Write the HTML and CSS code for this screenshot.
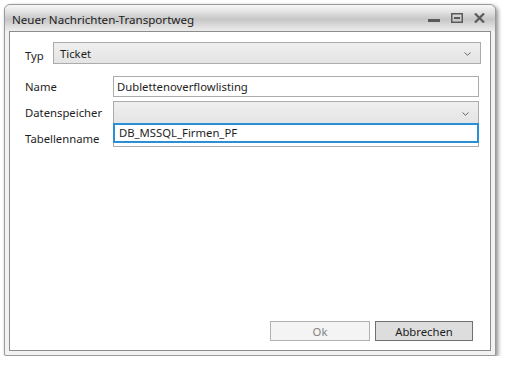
FILE: index.html
```html
<!DOCTYPE html>
<html lang="de">
<head>
  <meta charset="UTF-8">
  <title>Neuer Nachrichten-Transportweg</title>
  <link rel="stylesheet" href="styles.css">
</head>
<body>
  <div class="window">
    <div class="titlebar">
      <span class="title">Neuer Nachrichten-Transportweg</span>
      <div class="caption-buttons">
        <svg width="12" height="10" viewBox="0 0 12 10"><rect x="0" y="6" width="12" height="3" fill="#5a5a5a"/></svg>
        <svg width="12" height="10" viewBox="0 0 12 10"><rect x="0.75" y="0.75" width="10.5" height="8.5" fill="none" stroke="#5a5a5a" stroke-width="1.5"/><rect x="3" y="4" width="6" height="2" fill="#5a5a5a"/></svg>
        <svg width="11" height="10" viewBox="0 0 11 10"><path d="M1 0.5 L10 9.5 M10 0.5 L1 9.5" stroke="#5a5a5a" stroke-width="2.2"/></svg>
      </div>
    </div>

    <div class="content">
      <div class="typ-row">
        <label class="typ-label">Typ</label>
        <div class="combo">
          <span>Ticket</span>
          <svg class="chevron" width="7" height="4" viewBox="0 0 7 4"><path d="M0.5 0.5 L3.5 3.3 L6.5 0.5" fill="none" stroke="#666" stroke-width="1"/></svg>
        </div>
      </div>

      <div class="form">
        <label>Name</label>
        <div class="textbox">Dublettenoverflowlisting</div>

        <label>Datenspeicher</label>
        <div class="combo combo-small">
          <span></span>
          <svg class="chevron" width="7" height="4" viewBox="0 0 7 4"><path d="M0.5 0.5 L3.5 3.3 L6.5 0.5" fill="none" stroke="#666" stroke-width="1"/></svg>
        </div>

        <label class="label-tab">Tabellenname</label>
        <div class="dropdown-wrap">
          <div class="textbox textbox-under"></div>
          <div class="popup">DB_MSSQL_Firmen_PF</div>
        </div>
      </div>

      <div class="buttons">
        <button class="btn" disabled>Ok</button>
        <button class="btn btn-default">Abbrechen</button>
      </div>
    </div>
  </div>
</body>
</html>
```

FILE: styles.css
```css
body {
  margin: 0;
  background: #ffffff;
  font-family: "Noto Sans", "Open Sans", sans-serif;
  font-size: 11.3px;
  color: #1e1e1e;
}
.window {
  margin: 4px 0 0 4px;
  width: 490px;
  height: 350px;
  background: #f2f2f2;
  border: 1px solid #9a9a9a;
  border-radius: 6px 6px 2px 2px;
  box-shadow: 2px 2px 4px rgba(0,0,0,0.45);
  display: flex;
  flex-direction: column;
}
.titlebar {
  height: 26px;
  display: flex;
  align-items: center;
  justify-content: space-between;
  padding: 0 8px 0 7px;
  border-radius: 6px 6px 0 0;
  background: linear-gradient(#f7f7f7 0%, #e4e4e4 25%, #c6c6c6 55%, #dcdcdc 80%, #ececec 100%);
}
.title {
  font-size: 11.6px;
  color: #222;
  padding-top: 2px;
}
.caption-buttons {
  display: flex;
  align-items: center;
  gap: 11px;
  padding-right: 2px;
}
.content {
  flex: 1;
  margin: 0 4px 4px 4px;
  background: #ffffff;
  border: 1px solid #8c8c8c;
  padding: 10px 9px 9px 15px;
  display: flex;
  flex-direction: column;
}
.typ-row {
  display: flex;
  align-items: center;
}
.typ-label {
  width: 28px;
  padding-top: 5px;
}
.combo {
  flex: 1;
  height: 20px;
  border: 1px solid #acacac;
  background: linear-gradient(#efefef, #e4e4e4);
  display: flex;
  align-items: center;
  justify-content: space-between;
  padding: 0 9px 0 6px;
}
.chevron {
  margin-top: 2px;
}
.form {
  display: grid;
  grid-template-columns: 88px 1fr;
  margin: 12px 2px 0 0;
  row-gap: 4px;
  align-items: center;
}
.textbox {
  height: 19px;
  border: 1px solid #acacac;
  background: #ffffff;
  padding: 0 3px;
  line-height: 19px;
}
.combo-small {
  height: 21px;
}
.label-tab {
  align-self: start;
  padding-top: 3px;
}
.dropdown-wrap {
  position: relative;
  height: 24px;
  margin-top: -5px;
}
.textbox-under {
  margin-top: 2px;
  height: 20px;
}
.popup {
  position: absolute;
  left: 0;
  top: 0;
  right: 0;
  height: 16px;
  border: 2px solid #2b8fd6;
  background: #ffffff;
  padding: 0 4px;
  line-height: 16px;
}
.buttons {
  margin-top: auto;
  display: flex;
  justify-content: flex-end;
  gap: 5px;
  padding-right: 8px;
}
.btn {
  font-family: "Noto Sans", "Open Sans", sans-serif;
  font-size: 11.3px;
  height: 20px;
  padding: 0;
  border: 1px solid #707070;
  background: #dddddd;
  color: #1e1e1e;
}
.btn[disabled] {
  width: 100px;
  background: #f4f4f4;
  border-color: #adb2b5;
  color: #838383;
}
.btn-default {
  width: 98px;
}
```
